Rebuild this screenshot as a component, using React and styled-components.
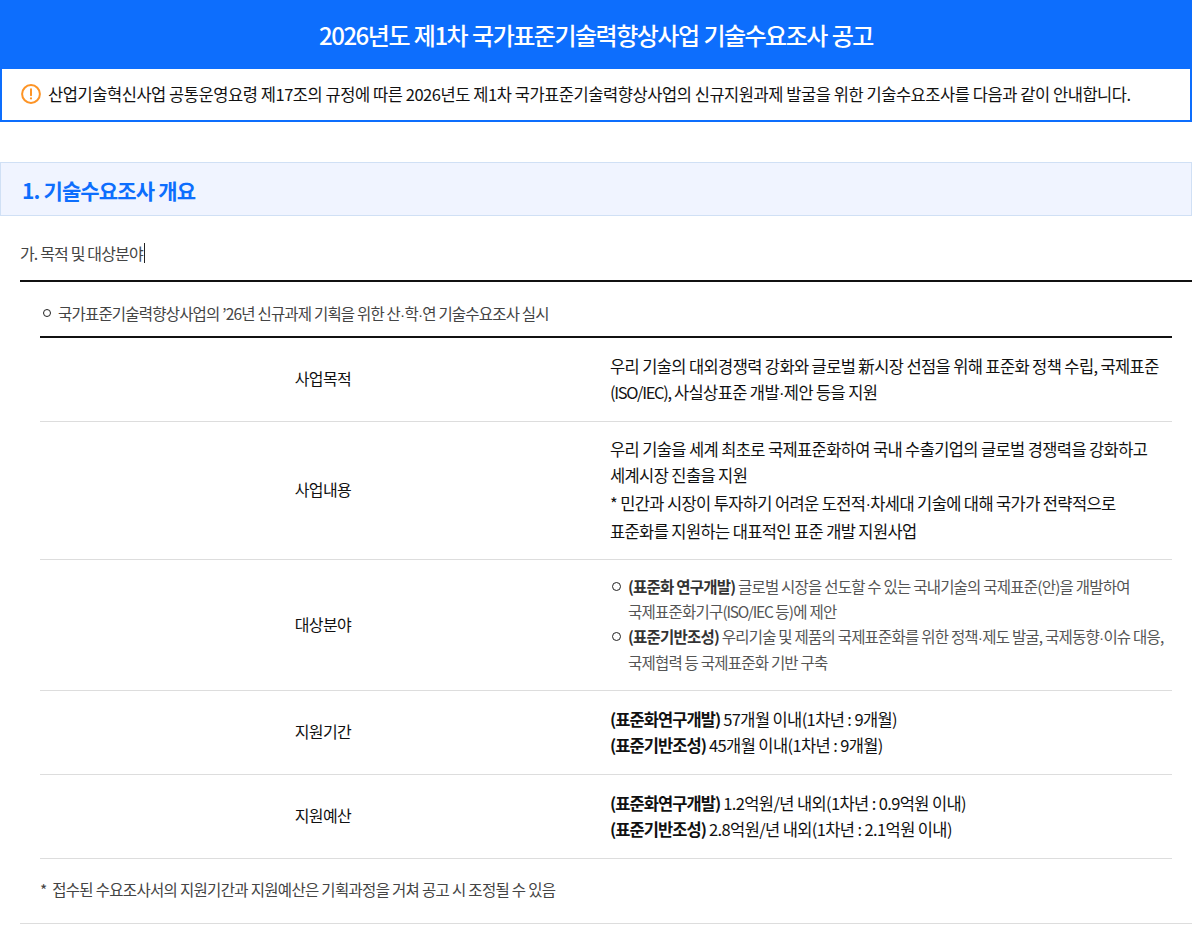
import styled, { createGlobalStyle } from "styled-components";

const GlobalStyle = createGlobalStyle`
  html, body { margin: 0; padding: 0; background: #fff; }
  body {
    font-family: "Noto Sans CJK KR", "Noto Sans", sans-serif;
    color: #111;
    overflow: hidden;
  }
  * { box-sizing: border-box; }
`;

const Page = styled.div`
  width: 1192px;
  height: 926px;
  overflow: hidden;
`;

const Banner = styled.h1`
  margin: 0;
  height: 69px;
  display: flex;
  align-items: center;
  justify-content: center;
  background: #0d6efd;
  color: #fff;
  font-size: 24px;
  font-weight: 500;
  letter-spacing: -1.5px;
  word-spacing: 1px;
`;

const Notice = styled.div`
  height: 53px;
  display: flex;
  align-items: center;
  gap: 7px;
  padding: 0 0 2px 19px;
  border: 2px solid #0d6efd;
  border-top: 0;
  font-size: 16.5px;
  letter-spacing: -0.45px;
  white-space: nowrap;
`;

const SectionTitle = styled.h2`
  margin: 40px 0 0;
  height: 54px;
  display: flex;
  align-items: center;
  padding: 2px 0 0 21px;
  background: #f0f4ff;
  border: 1px solid #d0e0f5;
  color: #0d6efd;
  font-size: 21px;
  font-weight: 700;
  letter-spacing: -0.85px;
`;

const Body = styled.div`
  padding-left: 20px;
`;

const SubTitle = styled.div`
  height: 66px;
  display: flex;
  align-items: center;
  padding-top: 10px;
  border-bottom: 2px solid #111;
  font-size: 16px;
  letter-spacing: -0.85px;
  color: #444;
`;

const Caret = styled.span`
  display: inline-block;
  width: 1px;
  height: 20px;
  margin-left: 1px;
  background: #222;
`;

const Inner = styled.div`
  padding: 0 20px;
`;

const Lead = styled.div`
  height: 54px;
  display: flex;
  align-items: center;
  gap: 7px;
  padding: 8px 0 0 3px;
  font-size: 15.5px;
  letter-spacing: -0.8px;
  color: #444;
`;

const Ring = styled.span`
  flex: none;
  width: 8px;
  height: 8px;
  border: 1px solid #222;
  border-radius: 50%;
`;

const Table = styled.div`
  border-top: 2px solid #111;
`;

const Row = styled.div`
  display: grid;
  grid-template-columns: 566px 1fr;
  align-items: center;
  height: ${(p) => p.$h}px;
  border-bottom: 1px solid #ddd;
`;

const Label = styled.div`
  text-align: center;
  padding-bottom: 3px;
  font-size: 16px;
  letter-spacing: -0.6px;
`;

const Value = styled.div`
  padding: 0 0 1px 4px;
  font-size: 16.5px;
  letter-spacing: -0.62px;
  white-space: nowrap;
  b { letter-spacing: -0.95px; }
`;

const Line = styled.div`
  line-height: ${(p) => p.$lh || 26}px;
`;

const Dot = styled.span`
  font-family: "Liberation Sans", sans-serif;
`;

const Latin = styled.span`
  letter-spacing: ${(p) => p.$ls}px;
`;

const Bullet = styled.div`
  display: grid;
  grid-template-columns: 16px 1fr;
  padding-left: 2px;
  font-size: 15.5px;
  line-height: 24.75px;
  letter-spacing: -0.78px;
  color: #555;
  b { color: #333; font-weight: 700; letter-spacing: -0.78px; }
`;

const BulletRing = styled(Ring)`
  width: 9px;
  height: 9px;
  margin-top: 8px;
`;

const Footnote = styled.div`
  height: 65px;
  display: flex;
  align-items: center;
  padding: 0 0 4px 20px;
  border-bottom: 1px solid #ddd;
  font-size: 15.5px;
  letter-spacing: -0.68px;
  color: #444;
`;

const NoticeIcon = () => (
  <svg width="20" height="20" viewBox="0 0 20 20" fill="none" style={{ flex: "none" }}>
    <circle cx="10" cy="10" r="8.9" stroke="#fd9426" strokeWidth="2" />
    <path d="M10 5.2v6" stroke="#fd9426" strokeWidth="2" strokeLinecap="round" />
    <circle cx="10" cy="14.4" r="1.1" fill="#fd9426" />
  </svg>
);

export default function App() {
  return (
    <Page>
      <GlobalStyle />
      <Banner>2026년도 제1차 국가표준기술력향상사업 기술수요조사 공고</Banner>
      <Notice>
        <NoticeIcon />
        산업기술혁신사업 공통운영요령 제17조의 규정에 따른 2026년도 제1차 국가표준기술력향상사업의 신규지원과제 발굴을 위한 기술수요조사를 다음과 같이 안내합니다.
      </Notice>
      <SectionTitle>1. 기술수요조사 개요</SectionTitle>
      <Body>
        <SubTitle>
          가. 목적 및 대상분야<Caret />
        </SubTitle>
        <Inner>
          <Lead>
            <Ring />
            <span>국가표준기술력향상사업의 ’26년 신규과제 기획을 위한 산<Dot>·</Dot>학<Dot>·</Dot>연 기술수요조사 실시</span>
          </Lead>
          <Table>
            <Row $h={84}>
              <Label>사업목적</Label>
              <Value>
                <Line>우리 기술의 대외경쟁력 강화와 글로벌 新시장 선점을 위해 표준화 정책 수립, 국제표준</Line>
                <Line><Latin $ls={-1.3}>(ISO/IEC),</Latin> 사실상표준 개발<Dot>·</Dot>제안 등을 지원</Line>
              </Value>
            </Row>
            <Row $h={138}>
              <Label>사업내용</Label>
              <Value>
                <Line>우리 기술을 세계 최초로 국제표준화하여 국내 수출기업의 글로벌 경쟁력을 강화하고</Line>
                <Line $lh={27}>세계시장 진출을 지원</Line>
                <Line $lh={28}>* 민간과 시장이 투자하기 어려운 도전적<Dot>·</Dot>차세대 기술에 대해 국가가 전략적으로</Line>
                <Line $lh={27}>표준화를 지원하는 대표적인 표준 개발 지원사업</Line>
              </Value>
            </Row>
            <Row $h={131}>
              <Label>대상분야</Label>
              <Value>
                <Bullet>
                  <BulletRing />
                  <div>
                    <b>(표준화 연구개발)</b> 글로벌 시장을 선도할 수 있는 국내기술의 국제표준(안)을 개발하여
                    <br />
                    국제표준화기구<Latin $ls={-1.2}>(ISO/IEC</Latin> 등)에 제안
                  </div>
                </Bullet>
                <Bullet>
                  <BulletRing />
                  <div>
                    <b>(표준기반조성)</b> 우리기술 및 제품의 국제표준화를 위한 정책<Dot>·</Dot>제도 발굴, 국제동향<Dot>·</Dot>이슈 대응,
                    <br />
                    국제협력 등 국제표준화 기반 구축
                  </div>
                </Bullet>
              </Value>
            </Row>
            <Row $h={84}>
              <Label>지원기간</Label>
              <Value>
                <Line><b>(표준화연구개발)</b> 57개월 이내(1차년 : 9개월)</Line>
                <Line><b>(표준기반조성)</b> 45개월 이내(1차년 : 9개월)</Line>
              </Value>
            </Row>
            <Row $h={84}>
              <Label>지원예산</Label>
              <Value>
                <Line><b>(표준화연구개발)</b> 1.2억원/년 내외(1차년 : 0.9억원 이내)</Line>
                <Line><b>(표준기반조성)</b> 2.8억원/년 내외(1차년 : 2.1억원 이내)</Line>
              </Value>
            </Row>
          </Table>
        </Inner>
        <Footnote>*&nbsp; 접수된 수요조사서의 지원기간과 지원예산은 기획과정을 거쳐 공고 시 조정될 수 있음</Footnote>
      </Body>
    </Page>
  );
}
